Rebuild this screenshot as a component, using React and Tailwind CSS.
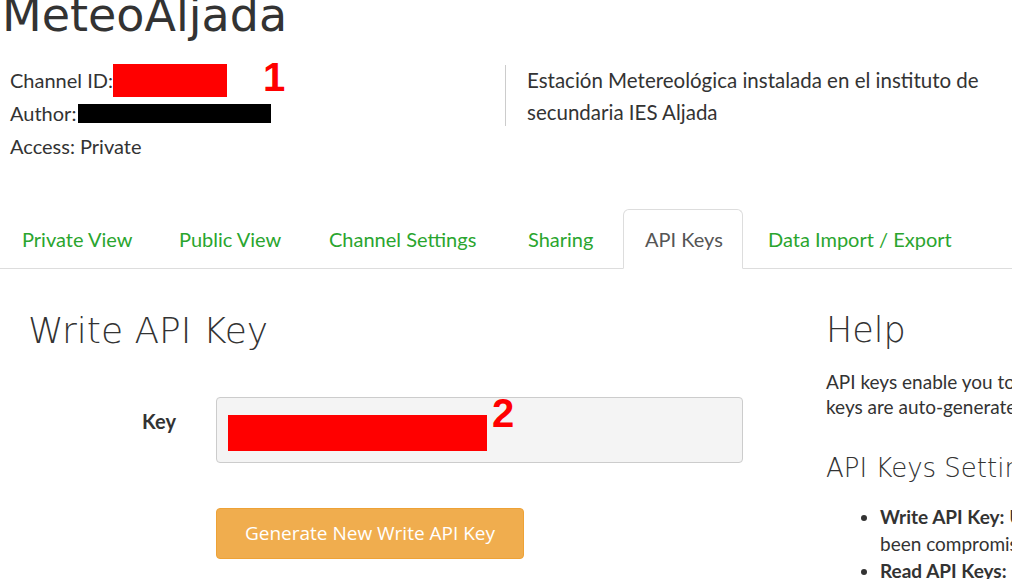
import React from 'react';

const TABS = [
  { label: 'Private View', w: 'w-[153px]' },
  { label: 'Public View', w: 'w-[146px]' },
  { label: 'Channel Settings', w: 'w-[195px]' },
  { label: 'Sharing', w: 'w-[112px]' },
  { label: 'API Keys', w: 'w-[120px]', active: true },
  { label: 'Data Import / Export', w: 'w-[226px]' },
];

const body = { fontFamily: 'Lato, "Noto Sans", sans-serif' };
const head = { fontFamily: '"DejaVu Sans", "Open Sans", sans-serif' };
const btn = { fontFamily: '"Open Sans", Lato, sans-serif' };
const red = { fontFamily: '"Liberation Sans", Arial, sans-serif' };

export default function App() {
  return (
    <div className="w-[1012px] h-[579px] overflow-hidden bg-white text-[#333]" style={body}>
      {/* cabecera del canal */}
      <div className="h-[209px] flow-root">
        <h1 className="mt-[-8px] ml-[2px] text-[46px] leading-none text-[#333]" style={head}>MeteoAljada</h1>
        <div className="mt-[25px] flex">
          <div className="w-[505px] pl-[10px] text-[20px] leading-[33px]">
            <div className="flex items-center">
              <span>Channel ID:</span>
              <span className="inline-block w-[114px] h-[33px] bg-[#ff0000]" />
              <span className="ml-[36px] text-[40px] leading-none font-bold text-[#ff0000] -mt-[6px]" style={red}>1</span>
            </div>
            <div className="flex items-center">
              <span>Author:</span>
              <span className="ml-[2px] inline-block w-[193px] h-[19px] bg-black" />
            </div>
            <div>Access: Private</div>
          </div>
          <div className="mt-[2px] h-[61px] border-l border-[#ccc] pl-[21px] text-[20.5px] leading-[32px]">
            <p className="-mt-[1px]">Estación Metereológica instalada en el instituto de<br />secundaria IES Aljada</p>
          </div>
        </div>
      </div>

      {/* pestañas */}
      <div className="flex gap-[4px] pl-[1px] border-b border-[#ddd] h-[60px]">
        {TABS.map(t => (
          <div
            key={t.label}
            className={`${t.w} h-[60px] pl-[21px] flex items-center text-[20px] rounded-t-[6px] ${t.active ? 'bg-white border border-[#ddd] border-b-white text-[#555]' : 'text-[#2aa52e]'}`}
          >
            {t.label}
          </div>
        ))}
      </div>

      <div className="flex">
        {/* columna izquierda */}
        <div className="w-[826px] shrink-0 pl-[28px]">
          <h2 className="mt-[44px] text-[36px] leading-none font-extralight text-[#333]" style={head}>Write API Key</h2>
          <div className="mt-[48px] flex items-start">
            <label className="w-[148px] pt-[9px] text-right text-[20px] font-bold">Key</label>
            <div className="relative ml-[40px] w-[527px] h-[66px] rounded-[4px] border border-[#ccc] bg-[#f4f4f4]">
              <span className="absolute left-[11px] top-[17px] w-[259px] h-[36px] bg-[#ff0000]" />
              <span className="absolute left-[275px] top-[-5px] text-[40px] leading-none font-bold text-[#ff0000]" style={red}>2</span>
            </div>
          </div>
          <button className="mt-[45px] ml-[188px] w-[308px] h-[51px] rounded-[4px] border border-[#eea236] bg-[#f0ad4e] text-white text-[19px]" style={btn}>
            Generate New Write API Key
          </button>
        </div>

        {/* ayuda */}
        <div className="w-[560px] shrink-0">
          <h2 className="mt-[44px] text-[35px] leading-none font-extralight text-[#333]" style={head}>Help</h2>
          <p className="mt-[21px] text-[19px] leading-[25px] whitespace-nowrap">
            API keys enable you to write data to a channel or read data from a private channel. API<br />
            keys are auto-generated when you create a new channel.
          </p>
          <h3 className="mt-[36px] text-[26px] leading-none font-extralight" style={head}>API Keys Settings</h3>
          <ul className="mt-[22px] pl-[54px] list-disc text-[19px] leading-[27px] whitespace-nowrap">
            <li><b>Write API Key:</b> Use this key to write data to a channel. If you feel your key has<br />been compromised, click Generate New Write API Key.</li>
            <li><b>Read API Keys:</b> Use this key to allow other people to view your private channel</li>
          </ul>
        </div>
      </div>
    </div>
  );
}
